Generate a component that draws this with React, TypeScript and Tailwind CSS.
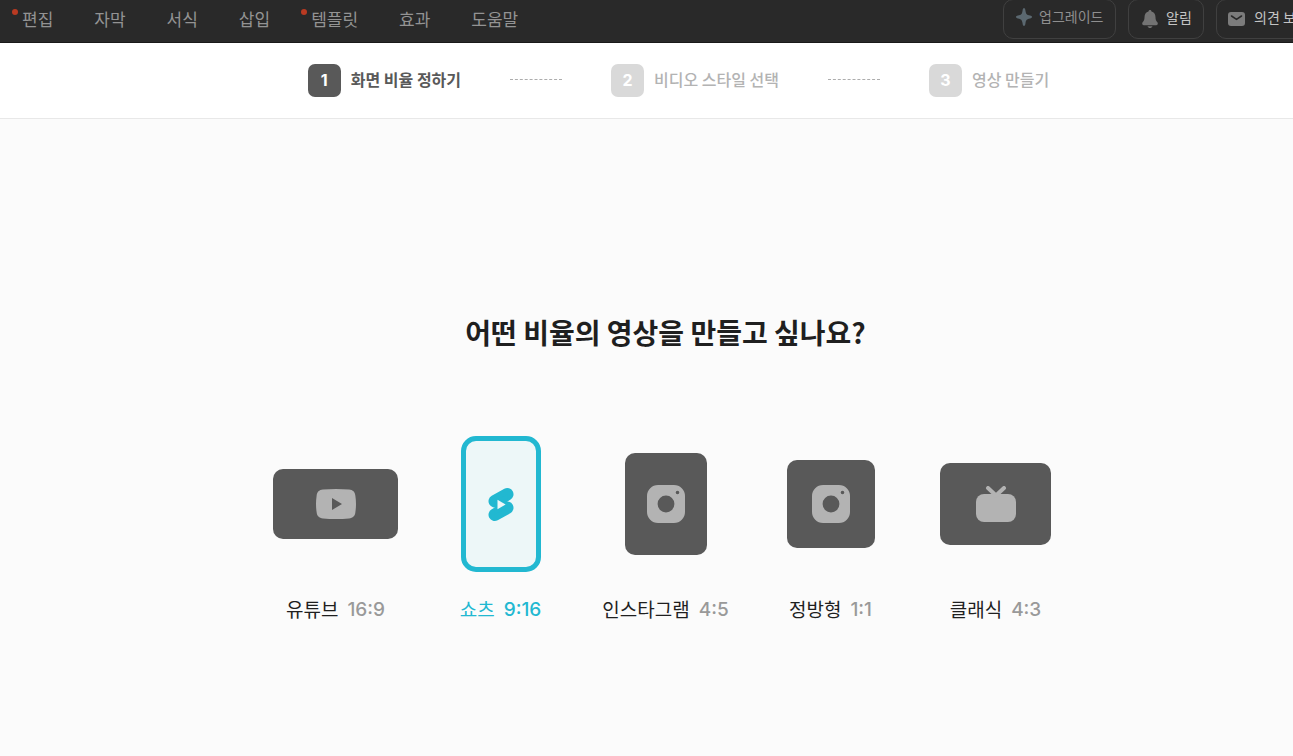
import { useState } from "react";
import type { ReactNode } from "react";
import clsx from "clsx";

interface IMenu {
	label: string;
	isNew?: boolean;
}

interface IRatio {
	name: string;
	ratio: string;
	size: string;
	icon: ReactNode;
}

const menus: IMenu[] = [
	{ label: "편집", isNew: true },
	{ label: "자막" },
	{ label: "서식" },
	{ label: "삽입" },
	{ label: "템플릿", isNew: true },
	{ label: "효과" },
	{ label: "도움말" },
];

const steps = ["화면 비율 정하기", "비디오 스타일 선택", "영상 만들기"];

function YoutubeIcon() {
	return (
		<svg width="40" height="30" viewBox="0 0 40 30" fill="currentColor" aria-hidden="true">
			<path
				fillRule="evenodd"
				d="M7 .6C15 -.2 25 -.2 33 .6C37 1 39 3 39.4 7C40.2 12 40.2 18 39.4 23C39 27 37 29 33 29.4C25 30.2 15 30.2 7 29.4C3 29 1 27 .6 23C-.2 18 -.2 12 .6 7C1 3 3 1 7 .6ZM16 9V21L26 15Z"
			/>
		</svg>
	);
}

function ShortsIcon() {
	return (
		<svg width="26" height="33" viewBox="0 0 26 33" aria-hidden="true">
			<g stroke="currentColor" strokeWidth="12.4" strokeLinecap="round">
				<path d="M6.7 13.2L19.3 6.3" />
				<path d="M6.7 26.7L19.3 19.8" />
			</g>
			<path fill="currentColor" d="M6.7 13.2L19.3 6.3V19.8L6.7 26.7Z" />
			<path fill="#edf7f8" d="M9.5 11.7V21.3L17.6 16.5Z" />
		</svg>
	);
}

function InstagramIcon() {
	return (
		<svg width="38" height="38" viewBox="0 0 38 38" fill="currentColor" aria-hidden="true">
			<path
				fillRule="evenodd"
				d="M11 0H27A11 11 0 0 1 38 11V27A11 11 0 0 1 27 38H11A11 11 0 0 1 0 27V11A11 11 0 0 1 11 0ZM19 10.6A8.4 8.4 0 1 0 19 27.4A8.4 8.4 0 1 0 19 10.6ZM30.5 5.7A1.8 1.8 0 1 0 30.5 9.3A1.8 1.8 0 1 0 30.5 5.7Z"
			/>
		</svg>
	);
}

function TvIcon() {
	return (
		<svg width="40" height="36" viewBox="0 0 40 36" aria-hidden="true">
			<rect y="8" width="40" height="28" rx="8" fill="currentColor" />
			<path
				d="M12 2L20 9.5L28 2"
				fill="none"
				stroke="currentColor"
				strokeWidth="4"
				strokeLinecap="round"
			/>
		</svg>
	);
}

function SparkIcon() {
	return (
		<svg width="16" height="18" viewBox="0 0 16 18" fill="#5b6870" aria-hidden="true">
			<path d="M8 0C8.8 0 9.2 .8 9.5 3C10 6.200 10.800 7 14 7.600C15.400 7.900 16 8.300 16 9C16 9.700 15.400 10.100 14 10.400C10.800 11 10 11.800 9.500 15C9.200 17.200 8.800 18 8 18C7.200 18 6.800 17.200 6.500 15C6 11.800 5.200 11 2 10.400C.6 10.100 0 9.700 0 9C0 8.300 .6 7.900 2 7.600C5.200 7 6 6.200 6.500 3C6.800 .8 7.200 0 8 0Z" />
		</svg>
	);
}

function BellIcon() {
	return (
		<svg width="16" height="18" viewBox="0 0 16 18" fill="#737373" aria-hidden="true">
			<path d="M8 0C8.900 0 9.500 .6 9.500 1.500C12.200 2.200 13.500 4.500 13.500 7.200C13.500 10 14.300 11 15.200 12C16.300 13.300 15.900 15.200 14.200 15.200H1.800C.1 15.200 -.3 13.300 .8 12C1.700 11 2.500 10 2.500 7.200C2.500 4.500 3.800 2.200 6.500 1.500C6.500 .6 7.100 0 8 0ZM5.500 16.200H10.500C10 17.400 9.200 18 8 18C6.800 18 6 17.400 5.500 16.200Z" />
		</svg>
	);
}

function MailIcon() {
	return (
		<svg width="17" height="14" viewBox="0 0 17 14" aria-hidden="true">
			<rect width="17" height="14" rx="3" fill="#7c7c7c" />
			<path
				d="M3.500 4L8.500 7.300L13.500 4"
				fill="none"
				stroke="#292929"
				strokeWidth="1.600"
				strokeLinecap="round"
			/>
		</svg>
	);
}

const ratios: IRatio[] = [
	{ name: "유튜브", ratio: "16:9", size: "w-[125px] h-[70px]", icon: <YoutubeIcon /> },
	{ name: "쇼츠", ratio: "9:16", size: "w-20 h-[136px]", icon: <ShortsIcon /> },
	{ name: "인스타그램", ratio: "4:5", size: "w-[82px] h-[102px]", icon: <InstagramIcon /> },
	{ name: "정방형", ratio: "1:1", size: "w-[88px] h-[88px]", icon: <InstagramIcon /> },
	{ name: "클래식", ratio: "4:3", size: "w-[111px] h-[82px]", icon: <TvIcon /> },
];

function Header() {
	const action =
		"flex h-10 shrink-0 items-center rounded-[10px] border border-[#404040] text-sm whitespace-nowrap";

	return (
		<header className="flex h-[43px] items-start justify-between overflow-hidden border-b border-[#1a1a1a] bg-[#292929]">
			<nav className="flex gap-[41px] pt-[7px] pl-[22px]">
				{menus.map((menu) => (
					<button
						key={menu.label}
						className="relative text-[17px] leading-6 whitespace-nowrap text-[#939393]"
					>
						{menu.isNew && (
							<span className="absolute top-[2px] -left-[10px] h-[6px] w-[6px] rounded-full bg-[#b93a22]" />
						)}
						{menu.label}
					</button>
				))}
			</nav>
			<div className="-mt-px -mr-4 flex gap-3">
				<button className={clsx(action, "w-[113px] gap-[7px] pb-1 pl-3 text-[#8f8f8f]")}>
					<SparkIcon />
					<span className="pb-[2px]">업그레이드</span>
				</button>
				<button className={clsx(action, "w-[76px] gap-2 pl-[13px] text-[#c4c4c4]")}>
					<BellIcon />
					<span className="pb-1">알림</span>
				</button>
				<button className={clsx(action, "w-[93px] gap-[9px] pl-[11px] text-[#c4c4c4]")}>
					<MailIcon />
					<span className="pb-1">의견 보</span>
				</button>
			</div>
		</header>
	);
}

function Steps() {
	return (
		<ol className="flex h-[76px] items-center justify-center border-b border-[#e8e8e8] bg-white pl-16">
			{steps.map((step, index) => (
				<li key={step} className="flex items-center">
					{index > 0 && (
						<span className="mx-[49px] mb-[2px] w-[52px] border-t border-dashed border-[#adadad]" />
					)}
					<span
						className={clsx(
							"flex h-[33px] w-[33px] items-center justify-center rounded-[7px] pb-[2px] font-[Inter] text-base font-bold text-white",
							index === 0 ? "bg-[#595959]" : "bg-[#d9d9d9]",
						)}
					>
						{index + 1}
					</span>
					<span
						className={clsx(
							"ml-[10px] pb-1 text-base whitespace-nowrap",
							index === 0 ? "font-semibold text-[#595959]" : "font-medium text-[#b3b3b3]",
						)}
					>
						{step}
					</span>
				</li>
			))}
		</ol>
	);
}

function App() {
	const [selected, setSelected] = useState("9:16");

	return (
		<div className="flex min-h-screen flex-col bg-[#fbfbfb] font-['Noto_Sans_CJK_KR',sans-serif]">
			<Header />
			<Steps />
			<main className="flex flex-1 flex-col items-center pt-[193px] pb-16 pl-[38px]">
				<h1 className="text-[28px] leading-10 font-bold text-[#1f1f1f]">
					어떤 비율의 영상을 만들고 싶나요?
				</h1>
				<div className="mt-[84px] flex">
					{ratios.map((item) => {
						const active = item.ratio === selected;
						return (
							<button
								key={item.ratio}
								aria-pressed={active}
								onClick={() => setSelected(item.ratio)}
								className="flex w-[165px] cursor-pointer flex-col items-center"
							>
								<span className="flex h-[136px] items-center">
									<span
										className={clsx(
											"flex items-center justify-center",
											item.size,
											active
												? "rounded-[15px] border-5 border-[#22b8d1] bg-[#edf7f8] text-[#22b8d1]"
												: "rounded-[10px] bg-[#595959] text-[#b3b3b3]",
										)}
									>
										{item.icon}
									</span>
								</span>
								<span
									className={clsx(
										"mt-[22px] flex items-center gap-[9px] text-[19px] leading-[30px] whitespace-nowrap",
										active ? "text-[#22b8d1]" : "text-[#1f1f1f]",
									)}
								>
									<span className="pb-[2px]">{item.name}</span>
									<span
										className={clsx(
											"font-[Inter] font-medium",
											!active && "text-[#999999]",
										)}
									>
										{item.ratio}
									</span>
								</span>
							</button>
						);
					})}
				</div>
			</main>
		</div>
	);
}

export default App;
